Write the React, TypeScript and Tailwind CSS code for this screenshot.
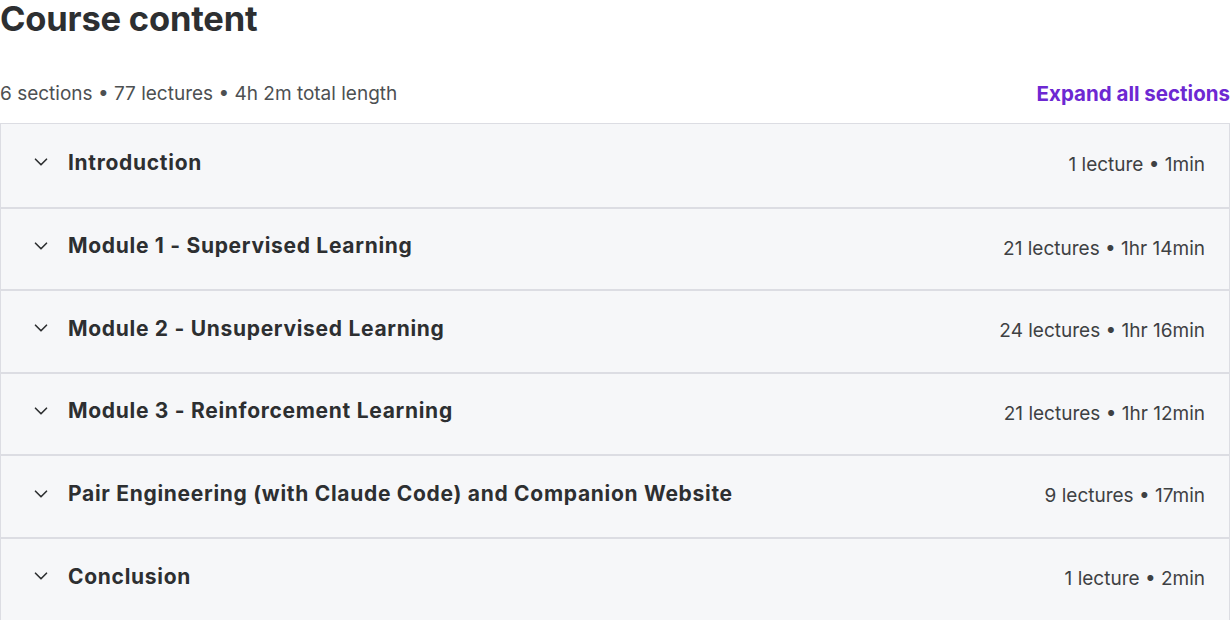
import { ChevronDown } from "lucide-react";

const sections = [
  { title: "Introduction", meta: "1 lecture • 1min" },
  { title: "Module 1 - Supervised Learning", meta: "21 lectures • 1hr 14min" },
  { title: "Module 2 - Unsupervised Learning", meta: "24 lectures • 1hr 16min" },
  { title: "Module 3 - Reinforcement Learning", meta: "21 lectures • 1hr 12min" },
  { title: "Pair Engineering (with Claude Code) and Companion Website", meta: "9 lectures • 17min" },
  { title: "Conclusion", meta: "1 lecture • 2min" },
];

export default function App() {
  return (
    <main className="w-[1230px] bg-white text-[#2d2f31]" style={{ fontFamily: "Inter, 'Noto Sans', sans-serif" }}>
      <h2 className="text-[34.5px] font-bold leading-[40px] tracking-[-0.2px] -mt-[1px]">Course content</h2>
      <div className="flex items-end justify-between mt-[38px] h-[31px]">
        <span className="text-[19px] text-[#4d5052] leading-[28px]">6 sections • 77 lectures • 4h 2m total length</span>
        <button className="text-[20.5px] font-bold text-[#6d28d2] leading-[28px]">Expand all sections</button>
      </div>
      <div className="mt-[15px] border border-[#dcdde3]">
        {sections.map((s, i) => (
          <div
            key={s.title}
            className={`flex items-center justify-between h-[82.6px] bg-[#f6f7f9] pl-[29px] pr-[24px] ${i > 0 ? "border-t-2 border-[#dcdde3]" : ""}`}
          >
            <div className="flex items-center gap-[16px] -mt-[6px]">
              <ChevronDown size={22} strokeWidth={1.8} className="text-[#2d2f31]" />
              <span className="text-[21px] font-bold tracking-[0.7px]">{s.title}</span>
            </div>
            <span className="text-[19px] text-[#3e4143]">{s.meta}</span>
          </div>
        ))}
      </div>
    </main>
  );
}
